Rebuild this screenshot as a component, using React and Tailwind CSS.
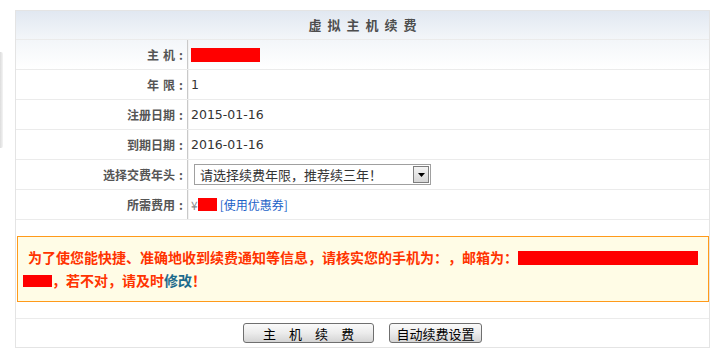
import React from 'react';

const cjk = { fontFamily: '"Noto Sans CJK SC", sans-serif' };

const rows = [
  { label: ['主', '机'], value: <span className="inline-block w-[69px] h-[14px] bg-[#ff0000] align-[-2px]" /> },
  { label: ['年', '限'], value: '1' },
  { label: '注册日期', value: '2015-01-16' },
  { label: '到期日期', value: '2016-01-16' },
  { label: '选择交费年头', value: 'select' },
  { label: '所需费用', value: 'price' },
];

const FakeSelect = () => (
  <div className="ml-[3px] w-[237px] h-[21px] flex items-center border border-[#a0a0a0] bg-white">
    <span className="pl-[5px] flex-1 text-[13px] text-[#333] leading-none" style={cjk}>
      请选择续费年限，推荐续三年！
    </span>
    <span className="mr-[1px] w-[16px] h-[17px] flex items-center justify-center border border-[#7d7d7d] bg-gradient-to-b from-[#f4f4f4] to-[#d6d6d6]">
      <svg width="7" height="4" viewBox="0 0 7 4"><path d="M0 0h7L3.5 4z" fill="#000" /></svg>
    </span>
  </div>
);

const Row = ({ label, value, first }) => {
  let content = value;
  if (value === 'select') content = <FakeSelect />;
  if (value === 'price')
    content = (
      <span className="text-[12px] flex items-center" style={cjk}>
        <span className="text-[#8a8a8a]">¥</span>
        <span className="inline-block w-[19px] h-[13px] bg-[#ff0000]" />
        <span className="ml-[3px] text-[#1c62c8]">[使用优惠券]</span>
      </span>
    );
  const isText = typeof value === 'string' && value !== 'select' && value !== 'price';
  return (
    <div
      className={
        'grid grid-cols-[172px_1fr] h-[30px] border-t border-[#ebebeb] ' +
        (first ? 'bg-gradient-to-b from-[#f3f6f9] to-[#ffffff]' : 'bg-white')
      }
    >
      <div
        className="flex items-center justify-end border-r border-[#c9c9c9] text-[12px] font-bold text-[#555]"
        style={cjk}
      >
        {Array.isArray(label) ? (
          <>
            {label[0]}
            <span className="inline-block w-[4px]" />
            {label[1]}
          </>
        ) : (
          label
        )}
        <span className="inline-block w-[12px] text-center">:</span>
      </div>
      <div
        className={
          'flex items-center pl-[2px] text-[12.5px] text-[#333] border-l border-[#f2f2f2] ' +
          (isText ? 'pt-[2px]' : '')
        }
        style={{ fontFamily: '"DejaVu Sans", "Noto Sans CJK SC", sans-serif' }}
      >
        {content}
      </div>
    </div>
  );
};

const Button = ({ children, wide }) => (
  <button
    className={
      'h-[20px] rounded-[3px] border border-[#6f6f6f] bg-gradient-to-b from-[#fafafa] via-[#ececec] to-[#d4d4d4] text-[13px] text-black leading-none flex items-center justify-center ' +
      (wide ? 'w-[131px] tracking-[13px] pl-[13px]' : 'w-[93px]')
    }
    style={cjk}
  >
    {children}
  </button>
);

export default function App() {
  return (
    <div className="w-[712px] h-[353px] bg-white flex overflow-hidden [text-spacing-trim:space-all]">
      {/* partial element at the left edge */}
      <div className="w-[3px] mt-[52px] h-[96px] rounded-r-[2px] bg-gradient-to-r from-[#dcdcdc] to-[#f4f4f4]" />
      <div className="ml-[12px] mt-[10px] w-[695px] h-[338px] border border-[#e4e4e4] flex flex-col">
        <div
          className="h-[28px] flex items-center justify-center pl-[6px] bg-gradient-to-b from-[#e1e8f1] to-[#f3f6f9] text-[13px] font-bold text-[#4d4d4d] tracking-[6px]"
          style={cjk}
        >
          虚拟主机续费
        </div>
        {rows.map((r, i) => (
          <Row key={i} label={r.label} value={r.value} first={i === 0} />
        ))}
        <div className="border-t border-[#ebebeb] pt-[16px] pb-[16px] pl-[1px] pr-[0px]">
          <div
            className="border border-[#ff9a1a] bg-[#fffce6] pl-[5px] py-[9px] text-[14px] leading-[23px] font-bold text-[#ff3300]"
            style={cjk}
          >
            <div className="pl-[5px] whitespace-nowrap">
              为了使您能快捷、准确地收到续费通知等信息，请核实您的手机为：，邮箱为：
              <span className="inline-block w-[180px] h-[14px] bg-[#ff0000] align-[-2px]" />
            </div>
            <div className="whitespace-nowrap">
              <span className="inline-block w-[29px] h-[12px] bg-[#ff0000] align-[-1px]" />
              ，若不对，请及时<span className="text-[#1d6b8c]">修改</span>！
            </div>
          </div>
        </div>
        <div className="flex-1 border-t border-[#ebebeb] flex items-center justify-center gap-[15px]">
          <Button wide>主机续费</Button>
          <Button>自动续费设置</Button>
        </div>
      </div>
    </div>
  );
}
